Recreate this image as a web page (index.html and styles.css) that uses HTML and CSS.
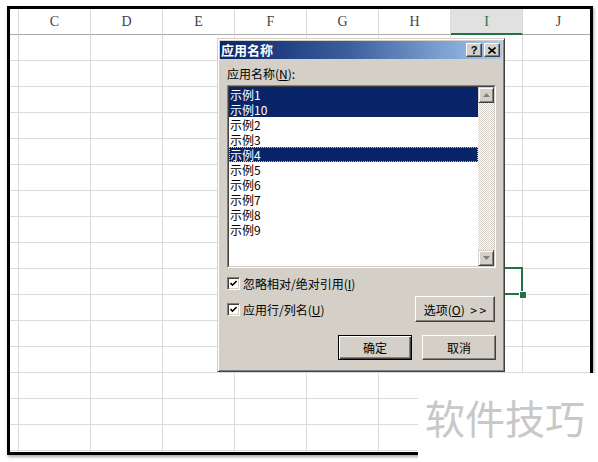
FILE: index.html
```html
<!DOCTYPE html>
<html>
<head>
<meta charset="utf-8">
<link rel="stylesheet" href="styles.css">
</head>
<body>
<div class="sheet">
  <div class="colhead">
    <div class="hc corner"></div>
    <div class="hc">C</div>
    <div class="hc">D</div>
    <div class="hc">E</div>
    <div class="hc">F</div>
    <div class="hc">G</div>
    <div class="hc">H</div>
    <div class="hc sel">I</div>
    <div class="hc">J</div>
  </div>
  <div class="cells"></div>
  <div class="selbox"><span class="handle"></span></div>
</div>

<div class="dialog">
  <div class="titlebar">
    <span class="title">应用名称</span>
    <span class="tbtn help">?</span>
    <span class="tbtn close"><svg width="8" height="7" viewBox="0 0 8 7"><path d="M0.5 0.5L7.5 6.5M7.5 0.5L0.5 6.5" stroke="#000" stroke-width="1.6" fill="none"/></svg></span>
  </div>
  <div class="dbody">
    <div class="label">应用名称(<u>N</u>):</div>
    <div class="listbox">
      <div class="listinner">
        <div class="items">
          <div class="item on">示例1</div>
          <div class="item on">示例10</div>
          <div class="item">示例2</div>
          <div class="item">示例3</div>
          <div class="item on focus">示例4</div>
          <div class="item">示例5</div>
          <div class="item">示例6</div>
          <div class="item">示例7</div>
          <div class="item">示例8</div>
          <div class="item">示例9</div>
        </div>
        <div class="sb">
          <div class="sbtn"><svg width="7" height="4" viewBox="0 0 7 4"><polygon points="3.5,0 7,4 0,4" fill="#808080"/></svg></div>
          <div class="sbtn down"><svg width="7" height="4" viewBox="0 0 7 4"><polygon points="0,0 7,0 3.5,4" fill="#808080"/></svg></div>
        </div>
      </div>
    </div>
    <div class="chkrow">
      <span class="box"><svg width="7" height="7" viewBox="0 0 7 7"><path d="M0.5 3L2.5 5.2L6.5 1" stroke="#000" stroke-width="1.6" fill="none"/></svg></span>
      <span>忽略相对/绝对引用(<u>I</u>)</span>
    </div>
    <div class="row2">
      <div class="chkrow2">
        <span class="box"><svg width="7" height="7" viewBox="0 0 7 7"><path d="M0.5 3L2.5 5.2L6.5 1" stroke="#000" stroke-width="1.6" fill="none"/></svg></span>
        <span>应用行/列名(<u>U</u>)</span>
      </div>
      <div class="btn opt">选项(<u>O</u>)&nbsp; &gt; &gt;</div>
    </div>
    <div class="btnrow">
      <div class="btn def">确定</div>
      <div class="btn">取消</div>
    </div>
  </div>
</div>

<div class="watermark">软件技巧</div>
</body>
</html>
```

FILE: styles.css
```css
html, body {
  margin: 0;
  padding: 0;
  background: #fff;
}
body {
  width: 598px;
  height: 462px;
  overflow: hidden;
  position: relative;
  box-sizing: border-box;
  padding: 6px 0 0 7px;
  font-family: "Noto Sans CJK SC", "Liberation Sans", sans-serif;
}

.sheet {
  position: relative;
  width: 586px;
  height: 449px;
  box-sizing: border-box;
  border: 3px solid #000;
  overflow: hidden;
  box-shadow: 1px 2px 3px rgba(0, 0, 0, 0.35);
}
.colhead {
  display: flex;
  height: 26px;
}
.hc {
  flex: 0 0 72px;
  height: 26px;
  box-sizing: border-box;
  border-right: 1px solid #dadada;
  border-bottom: 1px solid #ababab;
  text-align: center;
  font-family: "Liberation Serif", "DejaVu Serif", serif;
  font-size: 14px;
  line-height: 25px;
  color: #444;
}
.hc.corner {
  flex-basis: 9px;
}
.hc.sel {
  background: #e1e1e1;
  color: #217346;
  border-bottom: 2px solid #217346;
}
.cells {
  height: 423px;
  background-image:
    linear-gradient(to right, #dadada 1px, transparent 1px),
    linear-gradient(to bottom, transparent 25px, #dadada 25px);
  background-size: 72px 100%, 100% 26px;
  background-position: 8px 0, 0 0;
}
.selbox {
  position: absolute;
  left: 439px;
  top: 258px;
  width: 74px;
  height: 28px;
  box-sizing: border-box;
  border: 2px solid #217346;
}
.handle {
  position: absolute;
  left: 69px;
  top: 23px;
  width: 6px;
  height: 6px;
  background: #217346;
  box-shadow: 0 0 0 1px #fff;
}

/* dialog */
.dialog {
  position: absolute;
  left: 217px;
  top: 38px;
  width: 288px;
  height: 334px;
  box-sizing: border-box;
  background: #d4d0c8;
  border: 1px solid;
  border-color: #d4d0c8 #404040 #404040 #d4d0c8;
  box-shadow: inset 1px 1px 0 #fff, inset -1px -1px 0 #808080;
  padding: 2px;
  font-size: 12px;
  color: #000;
}
.titlebar {
  height: 18px;
  display: flex;
  align-items: center;
  background: linear-gradient(to right, #0a246a 0%, #3a5e9c 45%, #a6caf0 100%);
  padding: 0 2px 0 1px;
}
.title {
  flex: 1;
  color: #fff;
  font-weight: bold;
  font-size: 13px;
  line-height: 18px;
}
.tbtn {
  width: 16px;
  height: 14px;
  box-sizing: border-box;
  margin-left: 2px;
  background: #d4d0c8;
  border: 1px solid;
  border-color: #fff #404040 #404040 #fff;
  box-shadow: inset -1px -1px 0 #808080;
  display: flex;
  align-items: center;
  justify-content: center;
}
.tbtn.help {
  font-family: "Liberation Sans", sans-serif;
  font-weight: bold;
  font-size: 11px;
  line-height: 12px;
}
.dbody {
  padding: 8px 6px 0 7px;
}
.label {
  height: 14px;
  line-height: 14px;
}
.listbox {
  margin-top: 4px;
  height: 183px;
  box-sizing: border-box;
  border: 1px solid;
  border-color: #808080 #fff #fff #808080;
}
.listinner {
  height: 100%;
  box-sizing: border-box;
  border: 1px solid;
  border-color: #404040 #d4d0c8 #d4d0c8 #404040;
  background: #fff;
  display: flex;
}
.items {
  flex: 1;
}
.item {
  height: 15px;
  line-height: 15px;
  font-size: 12px;
  padding-left: 1px;
  white-space: nowrap;
  overflow: hidden;
}
.item.on {
  background: #0a246a;
  color: #fff;
}
.item.focus {
  outline: 1px dotted #c8c8c8;
  outline-offset: -1px;
}
.sb {
  width: 16px;
  display: flex;
  flex-direction: column;
  background: repeating-conic-gradient(#d4d0c8 0 25%, #fff 0 50%) 0 0 / 2px 2px;
}
.sbtn {
  height: 16px;
  box-sizing: border-box;
  background: #d4d0c8;
  border: 1px solid;
  border-color: #d4d0c8 #404040 #404040 #d4d0c8;
  box-shadow: inset 1px 1px 0 #fff, inset -1px -1px 0 #808080;
  display: flex;
  align-items: center;
  justify-content: center;
}
.sbtn.down {
  margin-top: auto;
}
.chkrow, .chkrow2 {
  display: flex;
  align-items: center;
  height: 16px;
}
.chkrow {
  margin-top: 7px;
}
.box {
  width: 13px;
  height: 13px;
  box-sizing: border-box;
  margin-right: 3px;
  background: #fff;
  border: 1px solid;
  border-color: #808080 #fff #fff #808080;
  box-shadow: inset 1px 1px 0 #404040, inset -1px -1px 0 #d4d0c8;
  display: flex;
  align-items: center;
  justify-content: center;
}
.row2 {
  display: flex;
  align-items: center;
  justify-content: space-between;
  margin-top: 5px;
  height: 26px;
}
.btn {
  width: 74px;
  height: 25px;
  box-sizing: border-box;
  background: #d4d0c8;
  border: 1px solid;
  border-color: #fff #404040 #404040 #fff;
  box-shadow: inset -1px -1px 0 #808080;
  display: flex;
  align-items: center;
  justify-content: center;
  font-size: 12px;
}
.btn.opt {
  width: 80px;
  height: 26px;
  margin-right: 1px;
}
.btn.def {
  border: 1px solid #000;
  box-shadow: inset 1px 1px 0 #fff, inset -1px -1px 0 #404040, inset -2px -2px 0 #808080;
}
.btnrow {
  display: flex;
  justify-content: flex-end;
  gap: 10px;
  margin-top: 13px;
}

.watermark {
  position: absolute;
  left: 418px;
  top: 373px;
  width: 180px;
  height: 89px;
  box-sizing: border-box;
  padding: 24px 0 0 7px;
  background: #fff;
  color: #c8c8c8;
  font-size: 40px;
  line-height: 40px;
  white-space: nowrap;
}
```
